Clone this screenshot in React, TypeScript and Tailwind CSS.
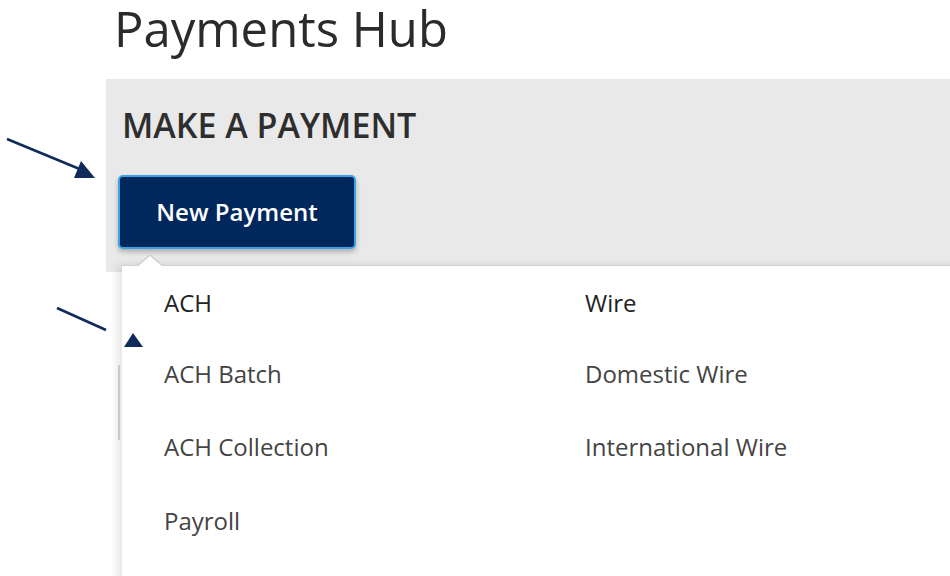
import React from "react";

const font = { fontFamily: '"Open Sans", "Noto Sans", sans-serif' };

export default function App() {
  return (
    <div className="relative w-[950px] h-[576px] overflow-hidden bg-white" style={font}>
      <div className="ml-[106px] flex flex-col">
        <div className="h-[79px] pl-[8px]">
          <h1 className="text-[49px] leading-[56px] text-[#2b2b2b] font-normal">Payments Hub</h1>
        </div>
        <div className="relative h-[193px] bg-[#e9e9e9] pl-[16px] pt-[28px]">
          <h2 className="text-[34px] leading-[36px] font-semibold text-[#2e2e2e]">MAKE A PAYMENT</h2>
          <button className="mt-[32px] -ml-[4px] w-[238px] h-[74px] rounded-[5px] border-2 border-[#3aa3e3] bg-[#00285c] text-white text-[24px] font-semibold shadow-[0_3px_5px_rgba(0,0,0,0.25)]">
            New Payment
          </button>
        </div>
        <div className="mt-[93px] ml-[12px] h-[75px] w-[2px] bg-[#d9d9d9]" />
      </div>

      {/* dropdown menu */}
      <div className="absolute left-[122px] top-[265px] w-[840px] h-[320px] bg-white border-t border-[#d2d2d2] shadow-[-5px_0_8px_rgba(0,0,0,0.10)]">
        <div className="absolute left-[14px] -top-[12px] w-0 h-0 border-l-[14px] border-r-[14px] border-b-[12px] border-l-transparent border-r-transparent border-b-[#cfcfcf]" />
        <div className="absolute left-[15px] -top-[10px] w-0 h-0 border-l-[13px] border-r-[13px] border-b-[11px] border-l-transparent border-r-transparent border-b-white" />
        <div className="grid grid-cols-[421px_1fr] pl-[42px] pt-[19px]">
          <div className="flex flex-col">
            <div className="h-[71px] text-[24px] leading-[36px] text-[#222]">ACH</div>
            <div className="h-[73px] text-[24px] leading-[36px] text-[#444]">ACH Batch</div>
            <div className="h-[74px] text-[24px] leading-[36px] text-[#444]">ACH Collection</div>
            <div className="h-[73px] text-[24px] leading-[36px] text-[#444]">Payroll</div>
          </div>
          <div className="flex flex-col">
            <div className="h-[71px] text-[24px] leading-[36px] text-[#222]">Wire</div>
            <div className="h-[73px] text-[24px] leading-[36px] text-[#444]">Domestic Wire</div>
            <div className="h-[74px] text-[24px] leading-[36px] text-[#444]">International Wire</div>
          </div>
        </div>
      </div>

      {/* annotation arrows */}
      <svg className="absolute left-0 top-0 pointer-events-none" width="950" height="576">
        <line x1="7" y1="139" x2="82" y2="170" stroke="#0e2b5c" strokeWidth="2.5" />
        <polygon points="81,161 95,178 74,178" fill="#0e2b5c" />
        <line x1="57" y1="308" x2="106" y2="330" stroke="#0e2b5c" strokeWidth="2.5" />
        <polygon points="133,333 143,347 124,347" fill="#0e2b5c" />
      </svg>
    </div>
  );
}
